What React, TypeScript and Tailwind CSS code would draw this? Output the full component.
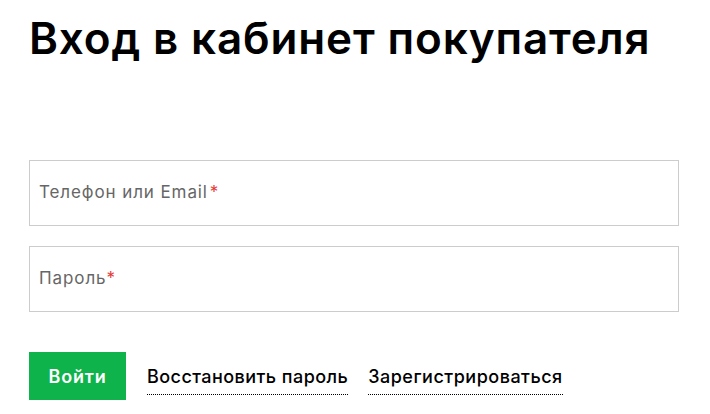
export default function App() {
  return (
    <div className="min-h-screen bg-white pl-[29px] pr-[31px] font-['Inter',sans-serif]">
      <h1 className="pt-[12px] text-[44px] font-semibold leading-[52px] tracking-[0.85px] text-black">
        Вход в кабинет покупателя
      </h1>

      <form className="mt-[96px]" onSubmit={(e) => e.preventDefault()}>
        <div className="flex flex-col gap-[20px]">
          <label className="flex h-[66px] w-full items-center border border-[#cccccc] px-[9px]">
            <span className="text-[17px] tracking-[0.9px] text-[#666666]">
              Телефон или Email<span className="ml-[2px] text-[#e53935]">*</span>
            </span>
          </label>
          <label className="flex h-[66px] w-full items-center border border-[#cccccc] px-[9px]">
            <span className="text-[17px] tracking-[0.9px] text-[#666666]">
              Пароль<span className="text-[#e53935]">*</span>
            </span>
          </label>
        </div>

        <div className="mt-[40px] flex items-center">
          <button
            type="submit"
            className="flex h-[48px] w-[97px] items-center justify-center bg-[#0fb34b] text-[18px] font-semibold tracking-[0.8px] text-white"
          >
            Войти
          </button>
          <a className="ml-[21px] border-b border-dotted border-black pb-[4px] pt-[6px] text-[18px] font-medium tracking-[0.45px] text-black">
            Восстановить пароль
          </a>
          <a className="ml-[20px] border-b border-dotted border-black pb-[4px] pt-[6px] text-[18px] font-medium tracking-[0.5px] text-black">
            Зарегистрироваться
          </a>
        </div>
      </form>
    </div>
  );
}
